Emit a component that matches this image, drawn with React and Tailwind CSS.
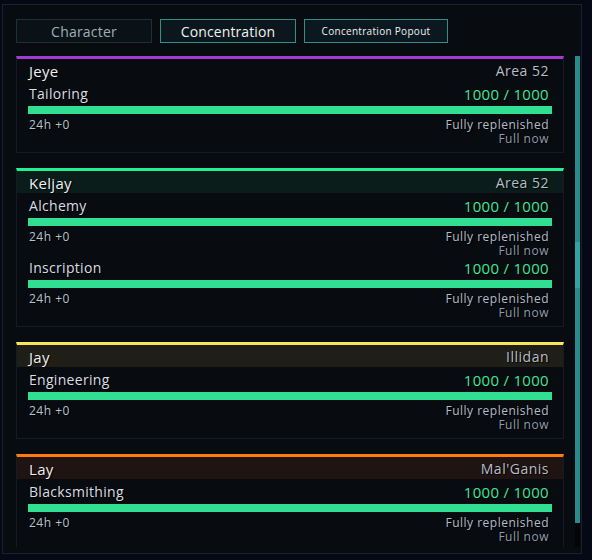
import React from "react";

const chars = [
  {
    name: "Jeye",
    realm: "Area 52",
    bar: "border-t-[#a33bd1]",
    head: "bg-transparent",
    profs: ["Tailoring"],
  },
  {
    name: "Keljay",
    realm: "Area 52",
    bar: "border-t-[#22f091]",
    head: "bg-[#0a1d1b]",
    profs: ["Alchemy", "Inscription"],
  },
  {
    name: "Jay",
    realm: "Illidan",
    bar: "border-t-[#f5e65a]",
    head: "bg-[#1f1f17]",
    profs: ["Engineering"],
  },
  {
    name: "Lay",
    realm: "Mal'Ganis",
    bar: "border-t-[#ff7b0f]",
    head: "bg-[#1f1411]",
    profs: ["Blacksmithing"],
  },
];

const shadow = "[text-shadow:1px_1px_1px_#000]";

function Profession({ label }) {
  return (
    <div className="px-[11px]">
      {/* name + value */}
      <div className={`flex justify-between items-center h-[20px] leading-[20px] pl-[1px] pr-[3px] ${shadow}`}>
        <span className="text-[14px] text-[#d9dde2] tracking-[0.3px]">{label}</span>
        <span className="text-[15px] text-[#3de899] tracking-[0.3px]">1000 / 1000</span>
      </div>
      <div className="h-[8px] mt-[2px] bg-[#30df92]"></div>
      <div className={`flex justify-between mt-[3px] pl-[1px] pr-[3px] text-[12px] tracking-[0.5px] ${shadow}`}>
        <div className="text-[#b9c1ca] leading-[15px]">24h +0</div>
        <div className="flex flex-col items-end">
          <div className="text-[#b3bcc7] leading-[15px]">Fully replenished</div>
          <div className="text-[#8d9cac] leading-[14px]">Full now</div>
        </div>
      </div>
    </div>
  );
}

function Card({ c }) {
  return (
    <div className={`border border-[#151b23] border-t-[3px] ${c.bar} shrink-0`}>
      <div className={`flex justify-between items-end h-[22px] pl-[12px] pr-[14px] ${c.head} ${shadow}`}>
        <span className="text-[15px] leading-[20px] text-[#eef0f2] tracking-[0.3px]">{c.name}</span>
        <span className="text-[14px] leading-[20px] text-[#b6bec8] tracking-[0.5px]">{c.realm}</span>
      </div>
      <div className="pt-[3px] pb-[6px]">
        {c.profs.map((p) => (
          <Profession key={p} label={p} />
        ))}
      </div>
    </div>
  );
}

export default function App() {
  return (
    <div
      className="w-[592px] h-[560px] bg-[#050915] overflow-hidden pt-[4px] pl-[2px]"
      style={{ fontFamily: "'Open Sans', 'Liberation Sans', sans-serif" }}
    >
      <div className="w-[580px] h-[550px] border border-[#18212c] bg-[#080b10] pl-[13px] pr-[1px] pt-[14px] flex flex-col">
        {/* Tabs */}
        <div className={`flex gap-2 h-[24px] ${shadow}`}>
          <button className="w-[136px] border border-[#1d3139] bg-[#0a1218] text-[14px] text-[#9fb0b2] tracking-[0.2px]">
            Character
          </button>
          <button className="w-[136px] border border-[#318f89] bg-[#0b171c] text-[14px] text-[#eef1f1] tracking-[0.1px]">
            Concentration
          </button>
          <button className="w-[144px] border border-[#318f89] bg-[#0c1820] text-[10px] text-[#eef1f1] tracking-[0.3px]">
            Concentration Popout
          </button>
        </div>

        {/* Body */}
        <div className="flex mt-[13px] h-[491px]">
          <div className="w-[548px] flex flex-col gap-[15px] overflow-hidden">
            {chars.map((c) => (
              <Card key={c.name} c={c} />
            ))}
          </div>
          <div className="ml-[11px] w-[5px] flex flex-col">
            <div className="h-[186px] bg-[#2a8a89]"></div>
            <div className="h-[46px] bg-[#33a2a1]"></div>
            <div className="h-[235px] bg-[#2a8a89]"></div>
            <div className="flex-1 bg-[#030506]"></div>
          </div>
        </div>
      </div>
    </div>
  );
}
